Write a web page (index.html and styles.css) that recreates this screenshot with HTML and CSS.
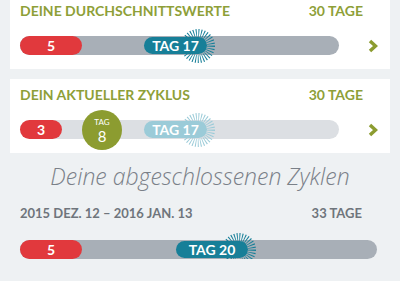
FILE: index.html
```html
<!DOCTYPE html>
<html lang="de">
<head>
    <meta charset="UTF-8">
    <meta name="viewport" content="width=device-width, initial-scale=1.0">
    <title>Zyklen</title>
    <link rel="stylesheet" href="styles.css">
</head>
<body>
    <!-- Durchschnittswerte -->
    <div class="card card-first">
        <div class="card-head">
            <span class="title">DEINE DURCHSCHNITTSWERTE</span>
            <span class="title">30 TAGE</span>
        </div>
        <div class="row">
            <div class="bar">
                <div class="period">5</div>
                <div class="day-pill" style="margin-left: 62px;">
                    TAG 17
                    <svg class="burst" viewBox="0 0 36 36"><circle cx="18" cy="18" r="13" /></svg>
                </div>
            </div>
            <svg class="chevron" viewBox="0 0 10 14"><polyline points="2,2 7.5,7 2,12" /></svg>
        </div>
    </div>

    <!-- Aktueller Zyklus -->
    <div class="card">
        <div class="card-head">
            <span class="title">DEIN AKTUELLER ZYKLUS</span>
            <span class="title">30 TAGE</span>
        </div>
        <div class="row">
            <div class="bar bar-light">
                <div class="period period-short">3</div>
                <div class="today" style="margin-left: 20px;">
                    <span class="today-label">TAG</span>
                    <span class="today-num">8</span>
                </div>
                <div class="day-pill day-pill-light" style="margin-left: 22px;">
                    TAG 17
                    <svg class="burst" viewBox="0 0 36 36"><circle cx="18" cy="18" r="13" /></svg>
                </div>
            </div>
            <svg class="chevron" viewBox="0 0 10 14"><polyline points="2,2 7.5,7 2,12" /></svg>
        </div>
    </div>

    <h2 class="section-title">Deine abgeschlossenen Zyklen</h2>

    <div class="history">
        <div class="card-head">
            <span class="date">2015 DEZ. 12 – 2016 JAN. 13</span>
            <span class="date">33 TAGE</span>
        </div>
        <div class="bar bar-long">
            <div class="period">5</div>
            <div class="day-pill day-pill-wide" style="margin-left: 94px;">
                TAG 20
                <svg class="burst" viewBox="0 0 36 36"><circle cx="18" cy="18" r="13" /></svg>
            </div>
        </div>
    </div>
</body>
</html>
```

FILE: styles.css
```css
body {
    margin: 0;
    background-color: #eef1f3;
    font-family: Lato, "Open Sans", sans-serif;
    overflow: hidden;
}
.card {
    background-color: white;
    margin: 10px 10px 0 10px;
    padding: 7px 12px 14px 10px;
}
.card-first {
    margin-top: 0;
    padding-top: 2px;
    padding-bottom: 14px;
}
.card-head {
    display: flex;
    justify-content: space-between;
    padding-right: 15px;
}
.title {
    font-size: 14px;
    font-weight: bold;
    color: #8e9f38;
    line-height: 17px;
}
.row {
    display: flex;
    align-items: center;
    margin-top: 17px;
}
.bar {
    flex: 1;
    display: flex;
    align-items: center;
    height: 19px;
    border-radius: 10px;
    background-color: #a8afb7;
}
.bar-light {
    background-color: #dcdfe3;
}
.period {
    width: 62px;
    height: 19px;
    border-radius: 10px;
    background-color: #e1393d;
    color: white;
    font-size: 14px;
    font-weight: bold;
    line-height: 19px;
    text-align: center;
}
.period-short {
    width: 42px;
}
.day-pill {
    position: relative;
    z-index: 0;
    width: 63px;
    height: 17px;
    border-radius: 9px;
    background-color: #177f98;
    color: white;
    font-size: 14px;
    font-weight: bold;
    line-height: 17px;
    text-align: center;
}
.day-pill-light {
    background-color: #9bcbd8;
}
.day-pill-wide {
    width: 72px;
}
.burst {
    position: absolute;
    z-index: -1;
    right: -9px;
    top: -9px;
    width: 36px;
    height: 36px;
}
.burst circle {
    fill: none;
    stroke: #177f98;
    stroke-width: 8;
    stroke-dasharray: 0.9 1.55;
}
.day-pill-light .burst circle {
    stroke: #9bcbd8;
}
.today {
    width: 40px;
    height: 40px;
    border-radius: 50%;
    background-color: #8c9c30;
    color: white;
    display: flex;
    flex-direction: column;
    align-items: center;
    justify-content: center;
    margin-top: 1px;
}
.today-label {
    font-size: 8px;
    line-height: 10px;
    margin-bottom: 1px;
}
.today-num {
    font-size: 15px;
    line-height: 16px;
}
.chevron {
    width: 10px;
    height: 14px;
    margin-left: 29px;
}
.chevron polyline {
    fill: none;
    stroke: #8c9c30;
    stroke-width: 3.5;
}
.section-title {
    margin: 7px 0 0 0;
    text-align: center;
    font-family: "Open Sans", sans-serif;
    font-style: italic;
    font-weight: 300;
    font-size: 23px;
    color: #7a8088;
}
.history {
    padding: 0 23px 0 20px;
    margin-top: 13px;
}
.date {
    font-size: 13px;
    font-weight: bold;
    color: #6f757c;
    line-height: 16px;
}
.bar-long {
    margin-top: 19px;
}
```
